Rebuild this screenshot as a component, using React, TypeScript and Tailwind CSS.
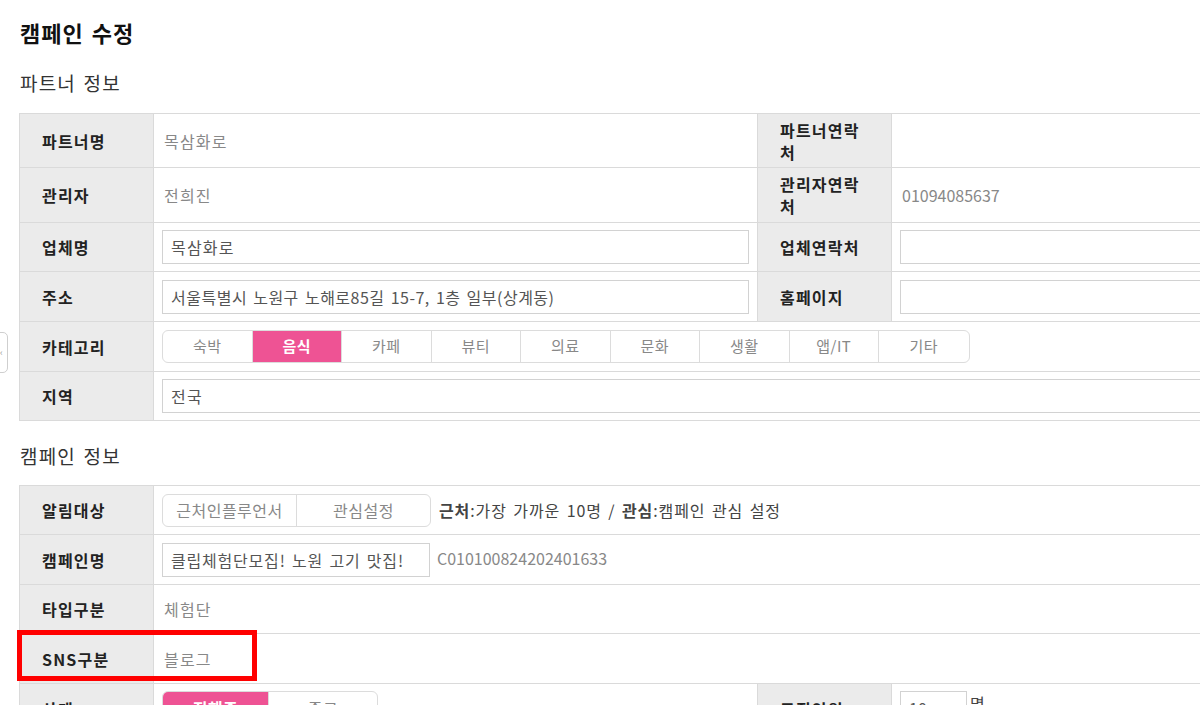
import React from 'react';

// --- shared cell styles ---
const FONT = { fontFamily: '"Noto Sans CJK KR", "Noto Sans", sans-serif' };

const Label = ({ children, className = '' }: { children: React.ReactNode; className?: string }) => (
  <div
    className={`bg-[#ebebeb] border-r border-b border-[#dadada] pl-[22px] pr-6 flex items-center font-bold text-[16px] leading-[22px] tracking-[1.2px] text-[#222] ${className}`}
  >
    {children}
  </div>
);

const Cell = ({ children, className = '' }: { children?: React.ReactNode; className?: string }) => (
  <div className={`bg-white border-r border-b border-[#dadada] flex items-center px-2 ${className}`}>
    {children}
  </div>
);

const Text = ({ children, className = '' }: { children: React.ReactNode; className?: string }) => (
  <span className={`pl-[2px] text-[16px] text-[#888] ${className}`}>{children}</span>
);

const Field = ({ value = '', className = 'w-full' }: { value?: string; className?: string }) => (
  <input
    readOnly
    defaultValue={value}
    className={`h-[34px] border border-[#d2d2d2] px-2 text-[16px] text-[#555] outline-none bg-white ${className}`}
  />
);

interface SegItem {
  label: string;
  active?: boolean;
}

const Segment = ({ items, widths }: { items: SegItem[]; widths: string[] }) => (
  <div className="flex h-[33px] border border-[#dcdcdc] rounded-[6px] overflow-hidden shrink-0">
    {items.map((it, i) => (
      <div
        key={it.label}
        className={`${widths[i]} flex items-center justify-center text-[15px] tracking-[0.5px] ${
          i < items.length - 1 ? 'border-r border-[#dcdcdc]' : ''
        } ${it.active ? 'bg-[#ee5394] text-white font-bold' : 'text-[#888]'}`}
      >
        {it.label}
      </div>
    ))}
  </div>
);

const CATEGORIES: SegItem[] = [
  { label: '숙박' },
  { label: '음식', active: true },
  { label: '카페' },
  { label: '뷰티' },
  { label: '의료' },
  { label: '문화' },
  { label: '생활' },
  { label: '앱/IT' },
  { label: '기타' },
];

export default function App() {
  return (
    <div className="relative w-[1200px] h-[705px] overflow-hidden bg-white" style={FONT}>
      {/* sidebar handle */}
      <div className="absolute left-[-12px] top-[332px] w-[20px] h-[41px] border border-[#cfcfcf] rounded-[5px] bg-white flex items-center pl-[11px] text-[9px] text-[#999]">
        ‹
      </div>

      <div className="pl-[19px] w-[1500px]">
        <h1 className="pl-[1px] mt-[16px] h-[33px] leading-[33px] text-[22px] font-bold text-[#111] tracking-[1px] [word-spacing:2px]">캠페인 수정</h1>
        <h2 className="pl-[1px] mt-[20px] h-[28px] leading-[28px] text-[19px] text-[#333] font-normal tracking-[1.2px] [word-spacing:2px]">파트너 정보</h2>

        {/* partner table */}
        <div className="mt-[16px] grid grid-cols-[134px_604px_134px_604px] grid-rows-[54px_55px_49px_50px_50px_49px] border-t border-l border-[#dadada]">
          <Label>파트너명</Label>
          <Cell><Text className="tracking-[1.2px]">목삼화로</Text></Cell>
          <Label>파트너연락처</Label>
          <Cell />

          <Label>관리자</Label>
          <Cell><Text className="tracking-[1.2px]">전희진</Text></Cell>
          <Label>관리자연락처</Label>
          <Cell><Text className="pl-0">01094085637</Text></Cell>

          <Label>업체명</Label>
          <Cell><Field value="목삼화로" className="w-full tracking-[1.2px]" /></Cell>
          <Label>업체연락처</Label>
          <Cell><Field /></Cell>

          <Label>주소</Label>
          <Cell>
            <Field
              value="서울특별시 노원구 노해로85길 15-7, 1층 일부(상계동)"
              className="w-full tracking-[0.5px] [word-spacing:2px]"
            />
          </Cell>
          <Label>홈페이지</Label>
          <Cell><Field /></Cell>

          <Label>카테고리</Label>
          <Cell className="col-span-3">
            <Segment items={CATEGORIES} widths={Array(9).fill('w-[89.5px]')} />
          </Cell>

          <Label>지역</Label>
          <Cell className="col-span-3"><Field value="전국" className="w-full tracking-[1.2px]" /></Cell>
        </div>

        <h2 className="pl-[1px] mt-[21px] h-[28px] leading-[28px] text-[19px] text-[#333] font-normal tracking-[1.2px] [word-spacing:2px]">캠페인 정보</h2>

        {/* campaign table */}
        <div className="mt-[15px] grid grid-cols-[134px_604px_134px_604px] grid-rows-[49px_50px_49px_50px_50px] border-t border-l border-[#dadada]">
          <Label>알림대상</Label>
          <Cell className="col-span-3 gap-2">
            <Segment
              items={[{ label: '근처인플루언서' }, { label: '관심설정' }]}
              widths={['w-[134px] text-[16px]', 'w-[133px] text-[16px]']}
            />
            <span className="text-[16px] text-[#444] tracking-[0.9px] [word-spacing:2px]">
              <b>근처</b>:가장 가까운 10명 / <b>관심</b>:캠페인 관심 설정
            </span>
          </Cell>

          <Label>캠페인명</Label>
          <Cell className="col-span-3 gap-[7px]">
            <Field
              value="클립체험단모집! 노원 고기 맛집!"
              className="w-[268px] text-[#333] tracking-[0.8px] [word-spacing:2px]"
            />
            <span className="text-[16px] text-[#888] -mt-[4px]">C010100824202401633</span>
          </Cell>

          <Label>타입구분</Label>
          <Cell className="col-span-3"><Text className="tracking-[1.2px]">체험단</Text></Cell>

          <Label>SNS구분</Label>
          <Cell className="col-span-3"><Text className="tracking-[1.2px]">블로그</Text></Cell>

          <Label>상태</Label>
          <Cell className="items-start pt-[7px]">
            <Segment
              items={[{ label: '진행중', active: true }, { label: '종료' }]}
              widths={['w-[106px] text-[16px]', 'w-[108px] text-[16px]']}
            />
          </Cell>
          <Label>모집인원</Label>
          <Cell className="items-start pt-[7px] gap-[3px]">
            <Field value="10" className="w-[67px]" />
            <span className="text-[16px] text-[#444]">명</span>
          </Cell>
        </div>
      </div>

      {/* red annotation box */}
      <div className="absolute left-[17px] top-[630px] w-[240px] h-[51px] border-[5px] border-[#ff0000]" />
    </div>
  );
}
